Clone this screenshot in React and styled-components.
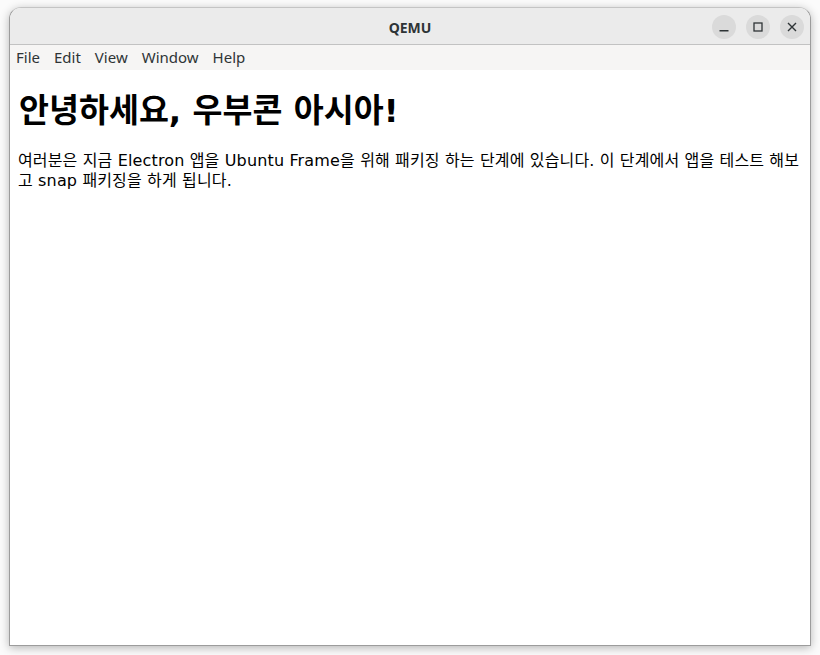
import React from "react";
import styled, { createGlobalStyle } from "styled-components";

const Global = createGlobalStyle`
  html, body { margin: 0; padding: 0; background: #ffffff; }
  body { width: 820px; height: 655px; overflow: hidden; }
`;

const Desktop = styled.div`
  width: 820px;
  height: 655px;
  box-sizing: border-box;
  padding: 7px 9px 0 9px;
  background: #fbfbfb;
`;

const Window = styled.div`
  width: 802px;
  height: 639px;
  box-sizing: border-box;
  border: 1px solid #9c9c9c;
  border-top-color: #c4c4c4;
  border-radius: 12px 12px 0 0;
  overflow: hidden;
  display: flex;
  flex-direction: column;
  background: #fff;
  box-shadow: 0 2px 10px rgba(0, 0, 0, 0.28);
`;

const TitleBar = styled.div`
  height: 36px;
  flex: none;
  background: #ebebeb;
  border-bottom: 1px solid #c2c2c2;
  display: grid;
  grid-template-columns: 1fr auto 1fr;
  align-items: center;
  padding: 0 6px 0 6px;
`;

const Title = styled.div`
  grid-column: 2;
  font-family: "Noto Sans", "Liberation Sans", sans-serif;
  font-weight: 700;
  font-size: 14px;
  color: #2e3436;
  padding-top: 2px;
`;

const Controls = styled.div`
  grid-column: 3;
  justify-self: end;
  display: flex;
  gap: 10px;
  padding-top: 2px;
`;

const CtlButton = styled.div`
  width: 24px;
  height: 24px;
  border-radius: 50%;
  background: #dadada;
  display: flex;
  align-items: center;
  justify-content: center;
  color: #2e3436;
`;

const MenuBar = styled.div`
  height: 25px;
  box-sizing: border-box;
  flex: none;
  background: #f6f5f4;
  display: flex;
  align-items: center;
  gap: 14px;
  padding: 0 6px 2px 6px;
  font-family: "Noto Sans", "Liberation Sans", sans-serif;
  font-size: 15px;
  color: #2e3436;
`;

const MenuItem = styled.span`
  line-height: 22px;
`;

const Content = styled.div`
  flex: 1;
  padding: 8px;
  font-family: "DejaVu Sans", "Noto Sans CJK KR", sans-serif;
  color: #000;
  font-size: 16px;
`;

const Heading = styled.h1`
  font-family: "DejaVu Sans", "Noto Sans CJK KR", sans-serif;
  font-size: 32.6px;
  font-weight: 700;
  margin: 13px 0 20px 1px;
  line-height: 40px;
`;

const Para = styled.p`
  margin: 0;
  font-size: 16px;
  line-height: 20px;
  letter-spacing: 0.15px;
`;

const Minimize = () => (
  <svg width="12" height="12" viewBox="0 0 12 12">
    <rect x="1.5" y="9" width="9" height="1.5" fill="currentColor" />
  </svg>
);
const Maximize = () => (
  <svg width="12" height="12" viewBox="0 0 12 12">
    <rect x="2" y="2" width="8" height="8" fill="none" stroke="currentColor" strokeWidth="1.3" />
  </svg>
);
const Close = () => (
  <svg width="12" height="12" viewBox="0 0 12 12">
    <path d="M2 2 L10 10 M10 2 L2 10" stroke="currentColor" strokeWidth="1.4" fill="none" />
  </svg>
);

export default function App() {
  return (
    <>
      <Global />
      <Desktop>
        <Window>
          <TitleBar>
            <Title>QEMU</Title>
            <Controls>
              <CtlButton><Minimize /></CtlButton>
              <CtlButton><Maximize /></CtlButton>
              <CtlButton><Close /></CtlButton>
            </Controls>
          </TitleBar>
          <MenuBar>
            {["File", "Edit", "View", "Window", "Help"].map((m) => (
              <MenuItem key={m}>{m}</MenuItem>
            ))}
          </MenuBar>
          <Content>
            <Heading>안녕하세요, 우부콘 아시아!</Heading>
            <Para>
              여러분은 지금 Electron 앱을 Ubuntu Frame을 위해 패키징 하는 단계에 있습니다. 이 단계에서 앱을 테스트 해보고 snap 패키징을 하게 됩니다.
            </Para>
          </Content>
        </Window>
      </Desktop>
    </>
  );
}
